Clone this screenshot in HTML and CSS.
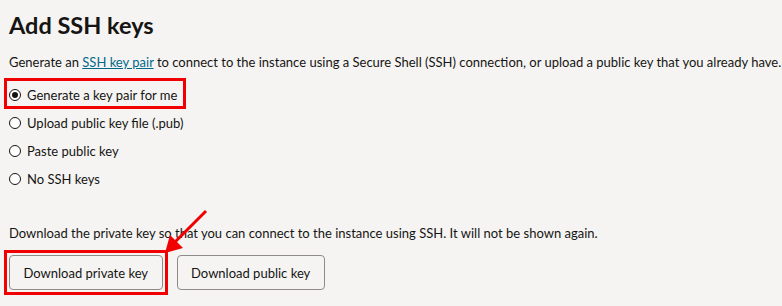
FILE: index.html
```html
<!DOCTYPE html>
<html>
<head>
<meta charset="utf-8">
<link rel="stylesheet" href="styles.css">
</head>
<body>
<div class="page">
  <h1 class="title">Add SSH keys</h1>
  <p class="intro">Generate an <a class="link" href="#">SSH key pair</a> to connect to the instance using a Secure Shell (SSH) connection, or upload a public key that you already have.</p>
  <div class="options">
    <div class="highlight">
      <label class="option"><span class="radio checked"></span><span>Generate a key pair for me</span></label>
    </div>
    <label class="option"><span class="radio"></span><span>Upload public key file (.pub)</span></label>
    <label class="option"><span class="radio"></span><span>Paste public key</span></label>
    <label class="option"><span class="radio"></span><span>No SSH keys</span></label>
  </div>
  <p class="note">Download the private key so that you can connect to the instance using SSH. It will not be shown again.</p>
  <div class="buttons">
    <div class="highlight-btn"><button class="btn">Download private key</button></div>
    <button class="btn">Download public key</button>
  </div>
</div>
<svg class="arrow" width="782" height="306" viewBox="0 0 782 306">
  <line x1="206" y1="211" x2="174" y2="243" stroke="#f00000" stroke-width="3"/>
  <polygon points="165,253 170,235 183,248" fill="#f00000"/>
</svg>
</body>
</html>
```
FILE: styles.css
```css
html, body {
  margin: 0;
  padding: 0;
  background: #f5f4f2;
}
body {
  font-family: "Lato", "Noto Sans", sans-serif;
  color: #161513;
  width: 782px;
  height: 306px;
  overflow: hidden;
  position: relative;
}
.page {
  display: flex;
  flex-direction: column;
  padding: 0 0 0 9px;
}
.title {
  margin: 10px 0 0 0;
  font-size: 23.5px;
  line-height: 30px;
  font-weight: 700;
}
.intro {
  margin: 13px 0 0 0;
  font-size: 13px;
  line-height: 18px;
  white-space: nowrap;
}
.link {
  color: #00688c;
  text-decoration: underline;
}
.options {
  display: flex;
  flex-direction: column;
  margin-top: 7px;
}
.highlight {
  align-self: flex-start;
  margin-left: -5px;
  border: 3px solid #f00000;
  padding: 3px 6px 0 2px;
  height: 22px;
  display: flex;
  align-items: center;
}
.option {
  display: flex;
  align-items: center;
  gap: 6px;
  height: 28px;
  font-size: 13px;
}
.radio {
  width: 10px;
  height: 10px;
  border: 1px solid #161513;
  border-radius: 50%;
  background: #fff;
  box-sizing: content-box;
  position: relative;
  flex: none;
}
.radio.checked::after {
  content: "";
  position: absolute;
  left: 2px;
  top: 2px;
  width: 6px;
  height: 6px;
  border-radius: 50%;
  background: #161513;
}
.note {
  margin: 31px 0 0 0;
  font-size: 13px;
  line-height: 18px;
}
.buttons {
  display: flex;
  align-items: center;
  gap: 9px;
  margin-top: 8px;
  margin-left: -5px;
}
.highlight-btn {
  border: 3px solid #f00000;
  padding: 2px;
  display: flex;
}
.btn {
  font-family: inherit;
  font-size: 13px;
  color: #161513;
  background: #f5f4f2;
  border: 1px solid #8f8c88;
  border-radius: 4px;
  height: 35px;
  padding: 0 13.5px;
  cursor: pointer;
}
.arrow {
  position: absolute;
  left: 0;
  top: 0;
  pointer-events: none;
}
```
